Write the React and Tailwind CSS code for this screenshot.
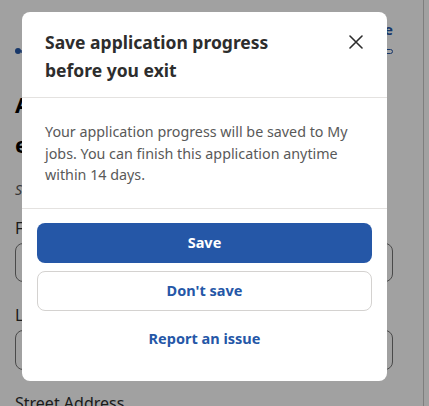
import React from 'react';

const font = { fontFamily: '"Noto Sans", "Liberation Sans", sans-serif' };

const CloseIcon = () => (
    <svg className="h-[14px] w-[14px]" viewBox="0 0 14 14" fill="none" stroke="currentColor" strokeWidth="1.6" strokeLinecap="round">
        <path d="M1 1l12 12M13 1L1 13" />
    </svg>
);

const App = () => {
    return (
        <div className="relative h-[406px] w-[429px] overflow-hidden bg-white text-[#2d2d2d]" style={font}>
            {/* Page behind the dialog */}
            <div className="h-full w-[424px] border-r border-[#c8c8c8] pl-[15px] pr-[30px]">
                <div className="flex justify-end pt-[19px] text-[15px] font-bold text-[#2557a7]">
                    <span className="leading-[20px]">Save and close</span>
                </div>
                <div className="mt-[9px] flex items-center">
                    <div className="h-[6px] w-[6px] rounded-full bg-[#2557a7]" />
                    <div className="h-[5px] flex-1 rounded-full border border-[#2557a7]" />
                </div>
                <h1 className="mt-[30px] whitespace-nowrap text-[22px] font-bold leading-[40px] text-black">
                    Answer these questions
                    <br />
                    employer asked
                </h1>
                <p className="mt-[16px] text-[14px] italic leading-[20px] text-[#595959]">Some fields are required</p>
                <label className="mt-[17px] block text-[16px] leading-[22px]">First name</label>
                <div className="mt-[4px] h-[39px] w-full rounded-[8px] border border-[#767676]" />
                <label className="mt-[22px] block text-[16px] leading-[22px]">Last name</label>
                <div className="mt-[4px] h-[40px] w-full rounded-[8px] border border-[#767676]" />
                <label className="mt-[22px] block text-[16px] leading-[22px]">Street Address</label>
            </div>

            {/* Dim overlay */}
            <div className="absolute inset-0 bg-black/[0.37]" />

            {/* Dialog */}
            <div className="absolute left-[22px] top-[12px] w-[365px] rounded-[8px] bg-white">
                <div className="flex items-start justify-between pl-[23px] pr-[24px] pt-[16px] pb-[13px]">
                    <h2 className="text-[17.5px] font-bold leading-[28px] text-[#2d2d2d]">
                        Save application progress
                        <br />
                        before you exit
                    </h2>
                    <button className="mt-[7px] text-[#2d2d2d]">
                        <CloseIcon />
                    </button>
                </div>
                <div className="border-t border-[#e4e2e0] pl-[23px] pr-[24px] pt-[23px] pb-[22px]">
                    <p className="text-[14.3px] leading-[21.5px] text-[#595959]">
                        Your application progress will be saved to My jobs. You can finish this application anytime within 14 days.
                    </p>
                </div>
                <div className="flex flex-col gap-[8px] border-t border-[#e4e2e0] px-[15px] pt-[14px] pb-[22px]">
                    <button className="h-[40px] w-full rounded-[8px] bg-[#2557a7] text-[14.5px] font-bold text-white">
                        Save
                    </button>
                    <button className="h-[40px] w-full rounded-[8px] border border-[#d4d2d0] bg-white text-[14.5px] font-bold text-[#2557a7]">
                        Don't save
                    </button>
                    <button className="h-[40px] w-full text-[14.5px] font-bold text-[#2557a7]">
                        Report an issue
                    </button>
                </div>
            </div>
        </div>
    );
};

export default App;
